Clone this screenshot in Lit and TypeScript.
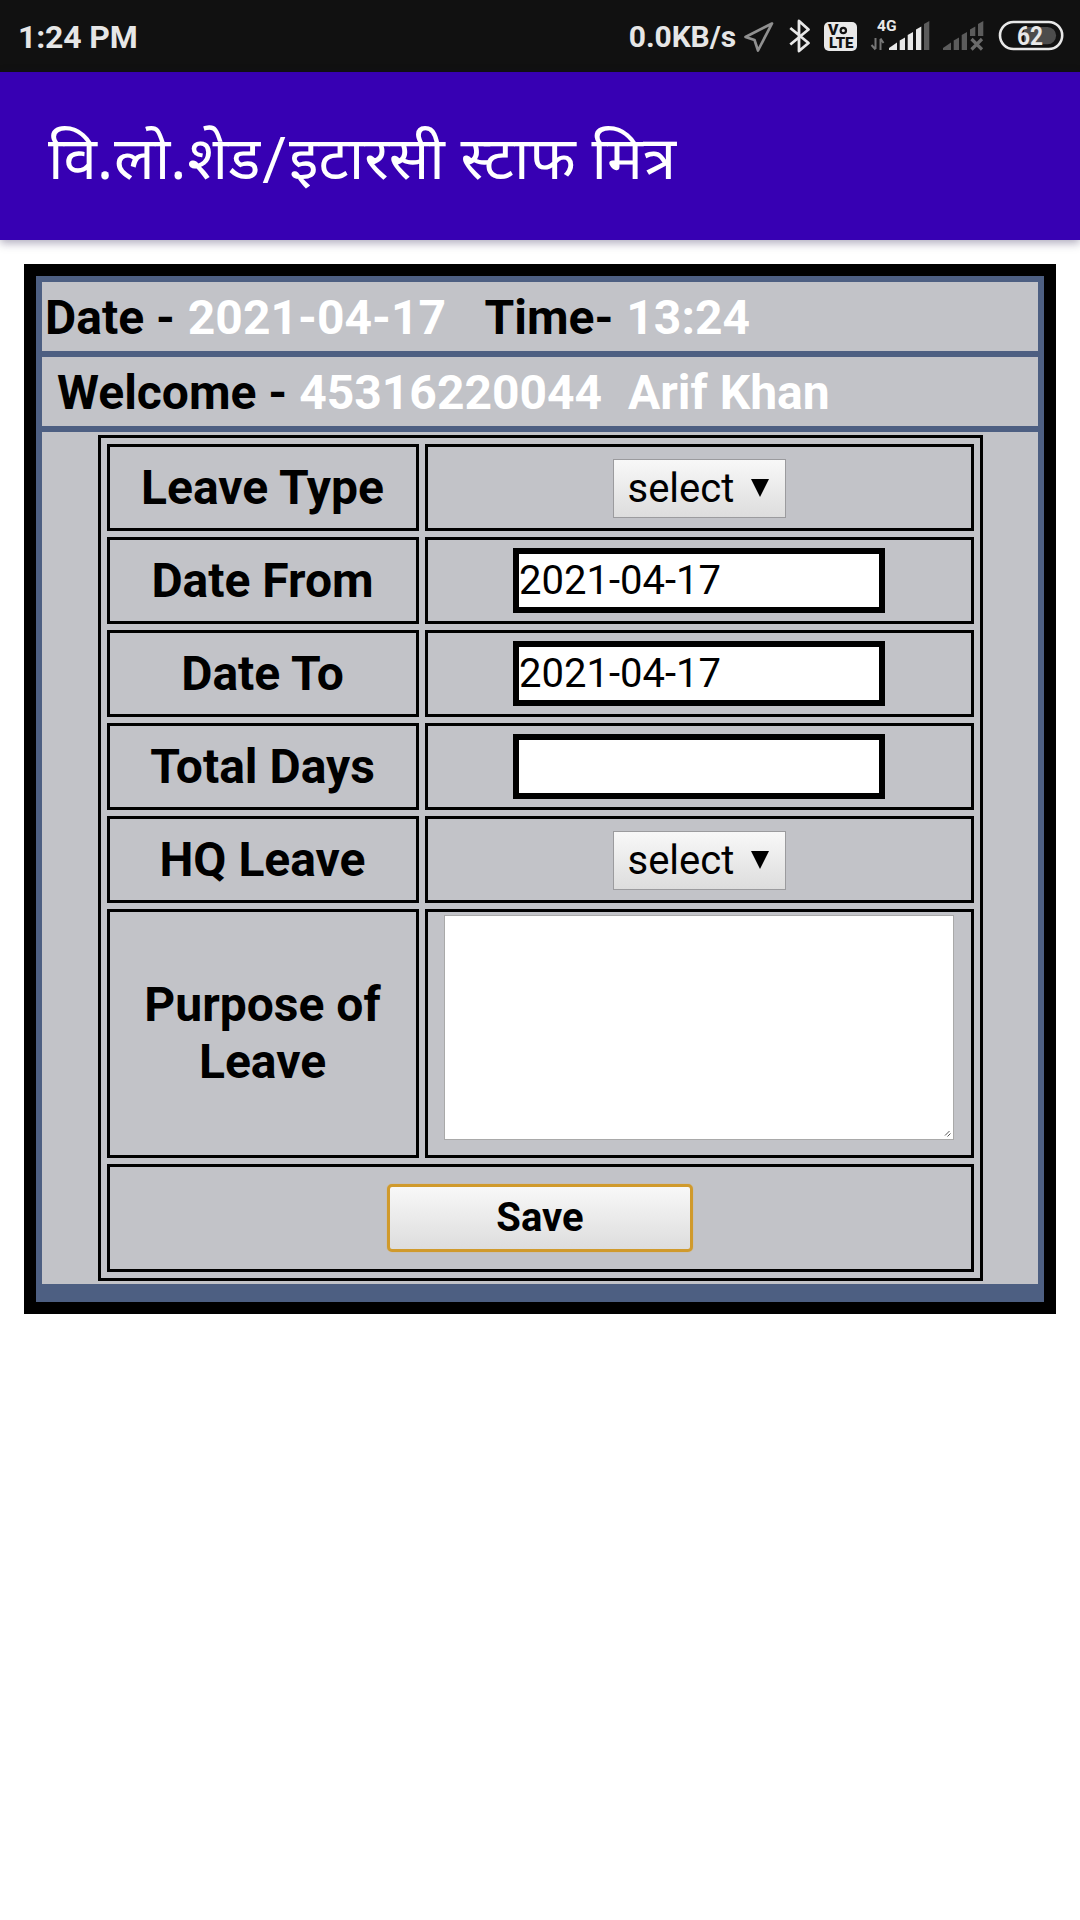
import { LitElement, html, css, svg } from "lit";
import { customElement } from "lit/decorators.js";

@customElement("status-bar")
class StatusBar extends LitElement {
  static styles = css`
    :host {
      display: flex;
      align-items: center;
      height: 72px;
      background: #111111;
      color: #e6e6e6;
      font: 700 32px/38px Roboto, "Liberation Sans", sans-serif;
    }
    .clock {
      flex: 1;
      padding-left: 18px;
      padding-top: 2px;
      letter-spacing: -0.15px;
    }
    .rate {
      padding-top: 1px;
      font-size: 30px;
      letter-spacing: -0.1px;
    }
    .icons {
      display: block;
      width: 344px;
      height: 72px;
    }
    .small {
      font: 700 15.5px Roboto, sans-serif;
    }
    .volte {
      font: 900 13.8px Roboto, sans-serif;
    }
    .level {
      font: 700 25.5px Roboto, sans-serif;
    }
  `;

  private bars(x: number, last: string, cut: boolean) {
    const tops = [42.5, 37.5, 32, 26.5, 21];
    const off = [0, 10.7, 18.7, 27, 35];
    return tops.map((t, i) => {
      const w = i === 0 ? 8 : 5.3;
      const l = x + off[i];
      const bottom = cut && i > 2 ? 36 : 50;
      const fill = cut || i === 4 ? last : "#e8e8e8";
      const rise = i === 0 ? 5.5 : 3;
      return svg`<path fill=${fill} d=${`M${l} ${t + rise}L${l + w} ${t}V${bottom}H${l}Z`}></path>`;
    });
  }

  render() {
    return html`
      <span class="clock">1:24 PM</span>
      <span class="rate">0.0KB/s</span>
      <svg class="icons" viewBox="736 0 344 72">
        <path d="M772 23.5L745.5 37L754.5 40L758 50.5Z" fill="none" stroke="#909090" stroke-width="2.7" stroke-linejoin="round"></path>
        <path d="M790.3 28L808.5 43L799 51V21L808.5 29.5L790.3 44.5" fill="none" stroke="#e8e8e8" stroke-width="2.8" stroke-linejoin="round"></path>
        <rect x="824" y="22" width="33" height="29" rx="5" fill="#e8e8e8"></rect>
        <text class="volte" x="828" y="34.5" textLength="10.5" lengthAdjust="spacingAndGlyphs" fill="#111">V</text>
        <circle cx="843.3" cy="30.5" r="2.7" fill="none" stroke="#111" stroke-width="2.2"></circle>
        <text class="volte" x="829" y="48" textLength="24.500" lengthAdjust="spacingAndGlyphs" fill="#111">LTE</text>
        <text class="small" x="877" y="31" textLength="19.5" lengthAdjust="spacingAndGlyphs" fill="#e8e8e8">4G</text>
        <path d="M875.5 38V49M875.5 49.5L871.5 45M880.5 50V39M880.5 38.5L883.5 43" fill="none" stroke="#777" stroke-width="2"></path>
        ${this.bars(889, "#5c5c5c", false)}
        ${this.bars(943, "#5c5c5c", true)}
        <path d="M971.5 39L982 49.5M982 39L971.5 49.5" stroke="#6a6a6a" stroke-width="3.2"></path>
        <rect x="1000" y="22" width="62.2" height="27" rx="13.5" fill="none" stroke="#e8e8e8" stroke-width="2.6"></rect>
        <path d="M1024 27H1047.500A8.600 8.600 0 0 1 1047.500 44.200H1024Z" fill="#4c4c4c"></path>
        <text class="level" x="1017" y="44.700" textLength="26" lengthAdjust="spacingAndGlyphs" fill="#e8e8e8">62</text>
      </svg>
    `;
  }
}

@customElement("leave-form")
class LeaveForm extends LitElement {
  static styles = css`
    :host {
      display: grid;
      grid-template-columns: 312px 549px;
      grid-template-rows: repeat(5, 87px) 249px 108px;
      gap: 6px;
      width: 867px;
      padding: 6px;
      border: 3px solid #000;
      margin: 3px 0 3px 56px;
      font: 700 48px/57px Roboto, "Liberation Sans", sans-serif;
      color: #000;
    }
    .cell {
      display: flex;
      align-items: center;
      justify-content: center;
      border: 3px solid #000;
      box-sizing: border-box;
      text-align: center;
      padding-right: 1px;
    }
    .wide {
      grid-column: span 2;
      padding-bottom: 1px;
    }
    .purpose {
      padding-bottom: 2px;
    }
    .area-cell {
      align-items: flex-start;
      padding-top: 3px;
    }
    .input {
      box-sizing: border-box;
      width: 372px;
      height: 65px;
      border: 6px solid #000;
      border-radius: 0;
      margin: 0;
      padding: 0 0 1px;
      background: #fff;
      color: #000;
      font: 400 40px/47px Roboto, sans-serif;
      outline: none;
    }
    .select {
      display: flex;
      align-items: center;
      justify-content: space-between;
      box-sizing: border-box;
      width: 173px;
      height: 59px;
      margin-top: 2px;
      padding: 0 16px 1px 14px;
      border: 1px solid #9b9b9e;
      background: linear-gradient(#f8f8f8, #dddddd);
      font: 400 40px/47px Roboto, sans-serif;
      color: #000;
    }
    .arrow {
      width: 18px;
      height: 18px;
      margin-bottom: 1px;
    }
    .area {
      display: flex;
      align-items: flex-end;
      justify-content: flex-end;
      box-sizing: border-box;
      width: 510px;
      height: 225px;
      border: 1px solid #a9a9a9;
      background: #fff;
    }
    .grip {
      width: 9px;
      height: 9px;
      margin: 0 1px 1px 0;
    }
    .save {
      box-sizing: border-box;
      width: 306px;
      height: 68px;
      margin: 0;
      padding: 0 0 1px;
      border: 3px solid #d09a2c;
      border-radius: 5px;
      background: linear-gradient(#f8f8f8, #dddddd);
      box-shadow: 0 0 1px #e5a83a;
      font: 700 40px/47px Roboto, sans-serif;
      color: #000;
    }
  `;

  private select() {
    return html`<div class="select" role="combobox">
      <span>select</span>
      <svg class="arrow" viewBox="0 0 18 18"><path d="M0 0H18L9 18Z"></path></svg>
    </div>`;
  }

  private row(label: string, control: unknown) {
    return html`<div class="cell">${label}</div>
      <div class="cell">${control}</div>`;
  }

  render() {
    return html`
      ${this.row("Leave Type", this.select())}
      ${this.row("Date From", html`<input class="input" .value=${"2021-04-17"} />`)}
      ${this.row("Date To", html`<input class="input" .value=${"2021-04-17"} />`)}
      ${this.row("Total Days", html`<input class="input" />`)}
      ${this.row("HQ Leave", this.select())}
      <div class="cell purpose">Purpose of<br />Leave</div>
      <div class="cell area-cell">
        <div class="area" role="textbox">
          <svg class="grip" viewBox="0 0 9 9">
            <path d="M2 6.500L6.500 2M4.500 7.500L7.500 4.500" stroke="#555" fill="none"></path>
          </svg>
        </div>
      </div>
      <div class="cell wide"><button class="save">Save</button></div>
    `;
  }
}

@customElement("app-root")
class AppRoot extends LitElement {
  static styles = css`
    :host {
      display: block;
      width: 1080px;
      height: 1920px;
      background: #fff;
      overflow: hidden;
    }
    .title {
      box-sizing: border-box;
      height: 168px;
      padding: 44px 0 0 48px;
      background: #3700b3;
      color: #fff;
      box-shadow: 0 3px 9px rgba(20, 10, 60, 0.35);
      font: 400 60px/80px "Noto Sans", "Noto Sans Devanagari", sans-serif;
      white-space: nowrap;
    }
    .dot {
      margin-right: 1px;
    }
    .slash {
      font-family: Roboto, sans-serif;
      line-height: 1;
      margin: 0 2px;
    }
    .panel {
      display: flex;
      flex-direction: column;
      gap: 6px;
      margin: 24px 24px 0;
      border: 12px solid #000;
      padding: 6px 6px 18px;
      background: #4d5f82;
    }
    .line {
      box-sizing: border-box;
      height: 69px;
      padding: 7px 3px 0;
      background: #c2c3c8;
      font: 700 48px/57px Roboto, "Liberation Sans", sans-serif;
      color: #000;
      white-space: pre;
    }
    .value {
      color: #fff;
    }
    .spaced {
      margin: 0 4px 0 1px;
    }
    .name {
      margin-left: 2px;
    }
    .time {
      margin-left: 1px;
    }
    .body {
      display: flex;
      background: #c2c3c8;
    }
  `;

  render() {
    return html`
      <status-bar></status-bar>
      <div class="title">वि<span class="dot">.</span>लो<span class="dot">.</span>शेड<span class="slash">/</span>इटारसी स्टाफ मित्र</div>
      <div class="panel">
        <div class="line">Date - <span class="value spaced">2021-04-17</span>   Time- <span class="value time">13:24</span></div>
        <div class="line"> Welcome - <span class="value">45316220044  <span class="name">Arif Khan</span></span></div>
        <div class="body"><leave-form></leave-form></div>
      </div>
    `;
  }
}
